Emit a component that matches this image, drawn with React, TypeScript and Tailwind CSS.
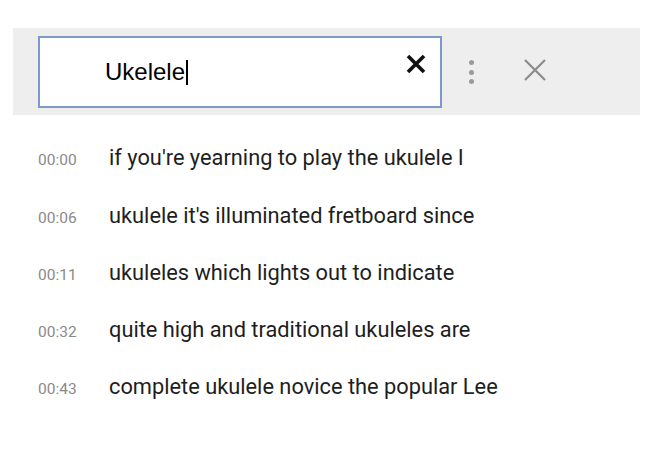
import React from "react";

const rows = [
  { time: "00:00", text: "if you're yearning to play the ukulele I" },
  { time: "00:06", text: "ukulele it's illuminated fretboard since" },
  { time: "00:11", text: "ukuleles which lights out to indicate" },
  { time: "00:32", text: "quite high and traditional ukuleles are" },
  { time: "00:43", text: "complete ukulele novice the popular Lee" },
];

function SearchBar() {
  return (
    <div className="ml-[13px] mt-[28px] flex h-[87px] w-[627px] items-start bg-[#eeeeee]">
      <div className="ml-[25px] mt-[8px] flex h-[72px] w-[404px] items-center border-2 border-[#7f98cc] bg-white">
        <div className="ml-[65px] flex items-center font-['Liberation_Sans',Arial,sans-serif] text-[24px] text-black">
          <span>Ukelele</span>
          <span className="ml-[1px] h-[25px] w-[1.5px] bg-black" />
        </div>
        <div className="ml-auto mr-[14px] mb-[16px]">
          <svg width="20" height="18" viewBox="0 0 20 18">
            <path d="M2 1 L18 17 M18 1 L2 17" stroke="#111" strokeWidth="3.6" strokeLinecap="butt" />
          </svg>
        </div>
      </div>
      <div className="ml-[27px] mt-[32px] flex flex-col gap-[4.5px]">
        <span className="block h-[5px] w-[5px] rounded-full bg-[#9a9a9a]" />
        <span className="block h-[5px] w-[5px] rounded-full bg-[#9a9a9a]" />
        <span className="block h-[5px] w-[5px] rounded-full bg-[#9a9a9a]" />
      </div>
      <div className="ml-[50px] mt-[31px]">
        <svg width="22" height="22" viewBox="0 0 22 22">
          <path d="M1 1 L21 21 M21 1 L1 21" stroke="#8c8c8c" strokeWidth="2.2" />
        </svg>
      </div>
    </div>
  );
}

export default function App() {
  return (
    <div className="h-[464px] w-[670px] overflow-hidden bg-white">
      <SearchBar />
      <ul className="mt-[15px] font-['Roboto',sans-serif]">
        {rows.map((r) => (
          <li key={r.time} className="flex h-[57.3px] items-center">
            <div className="flex items-baseline">
              <span className="ml-[38px] w-[71px] text-[15.5px] text-[#8a8a8a]">{r.time}</span>
              <span className="text-[21.8px] text-[#1e1e1e]">{r.text}</span>
            </div>
          </li>
        ))}
      </ul>
    </div>
  );
}
